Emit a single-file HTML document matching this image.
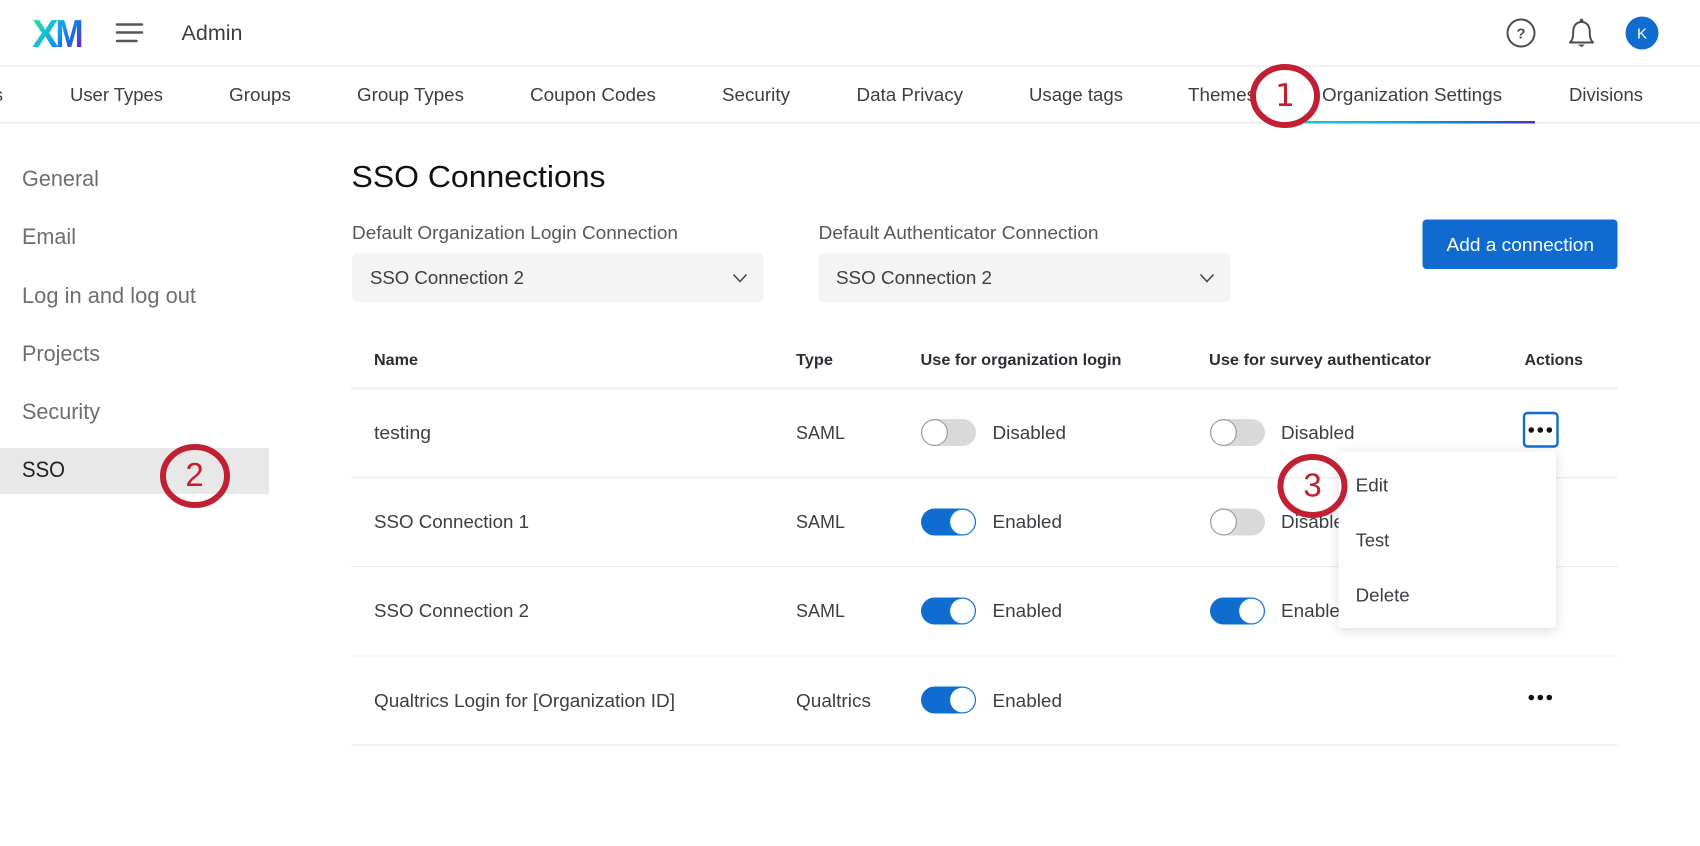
<!DOCTYPE html>
<html lang="en">
<head>
<meta charset="utf-8">
<title>SSO Connections</title>
<style>
html,body{margin:0;padding:0;background:#fff;width:1700px;height:846px;overflow:hidden}
svg{display:block}
text{font-family:"Liberation Sans",sans-serif;fill:#3b3e43}
.tab{font-size:18.5px}
.nav{font-size:22px;fill:#6c6e70}
.row{font-size:18.5px}
.th{font-size:16px;font-weight:bold;fill:#2b2e33}
.num{font-size:33px;fill:#c2202f}
</style>
</head>
<body>
<svg width="1700" height="846" viewBox="0 0 1700 846" xmlns="http://www.w3.org/2000/svg">
<defs>
<linearGradient id="xm" gradientUnits="userSpaceOnUse" x1="36" y1="18" x2="78" y2="48">
<stop offset="0" stop-color="#2be09a"/><stop offset=".28" stop-color="#18c4d0"/><stop offset=".5" stop-color="#11a0f0"/><stop offset=".75" stop-color="#1a70e0"/><stop offset="1" stop-color="#5f30d8"/>
</linearGradient>
<linearGradient id="ul" x1="0" x2="1" y1="0" y2="0">
<stop offset="0" stop-color="#12c9d8"/><stop offset=".35" stop-color="#10aee6"/><stop offset=".75" stop-color="#1370d8"/><stop offset="1" stop-color="#4a35b8"/>
</linearGradient>
<filter id="sh" x="-20%" y="-20%" width="140%" height="140%"><feDropShadow dx="0" dy="2" stdDeviation="6" flood-color="#000" flood-opacity=".15"/></filter>
<g id="off"><rect x=".5" y=".5" width="55" height="27" rx="13.5" fill="#d9d9d9"/><circle cx="14" cy="14" r="12.9" fill="#fff" stroke="#9a9c9f" stroke-width="1.2"/></g>
<g id="on"><rect x=".5" y=".5" width="55" height="27" rx="13.5" fill="#0f6dcf"/><circle cx="42" cy="14" r="12.9" fill="#fff" stroke="#1b78d8" stroke-width="1.2"/></g>
<g id="chev"><path d="M-6.500-3.500 0 3.500 6.500-3.500" fill="none" stroke="#45484c" stroke-width="1.600"/></g>
</defs>

<!-- header -->
<rect x="0" y="65.500" width="1700" height="1.500" fill="#ececec"/>
<text x="32" y="47" font-size="38.500" font-weight="bold" textLength="26.500" lengthAdjust="spacingAndGlyphs" style="fill:url(#xm)">X</text><text x="55.500" y="47" font-size="38.500" font-weight="bold" textLength="28" lengthAdjust="spacingAndGlyphs" style="fill:url(#xm)">M</text>
<g stroke="#54575b" stroke-width="2.500" stroke-linecap="round" fill="none"><path d="M117 24.500H142M117 32.500H142M117 41H136.500"/></g>
<text x="181.500" y="40" font-size="21.500" textLength="61" lengthAdjust="spacingAndGlyphs">Admin</text>
<circle cx="1521" cy="33" r="13.500" fill="none" stroke="#4a4d50" stroke-width="2"/>
<text x="1521" y="38.500" font-size="15" font-weight="bold" text-anchor="middle" style="fill:#4a4d50">?</text>
<path d="M1570 42.500c2.500-2.500 3.200-5 3.200-10.500 0-6 3-10 8.300-10s8.300 4 8.300 10c0 5.500.7 8 3.200 10.500z" fill="none" stroke="#4a4d50" stroke-width="2" stroke-linejoin="round"/>
<circle cx="1581.500" cy="20.500" r="1.800" fill="#4a4d50"/>
<path d="M1578 44.500h7l-3.500 2.800z" fill="#4a4d50"/>
<circle cx="1642" cy="33" r="16.500" fill="#0f6dcf"/>
<text x="1642" y="38.500" font-size="15" text-anchor="middle" style="fill:#fff">K</text>

<!-- tabs -->
<rect x="0" y="122" width="1700" height="1.500" fill="#ececec"/>
<text class="tab" x="-6" y="101" textLength="9" lengthAdjust="spacingAndGlyphs">s</text>
<text class="tab" x="70" y="101" textLength="93" lengthAdjust="spacingAndGlyphs">User Types</text>
<text class="tab" x="229" y="101" textLength="62" lengthAdjust="spacingAndGlyphs">Groups</text>
<text class="tab" x="357" y="101" textLength="107" lengthAdjust="spacingAndGlyphs">Group Types</text>
<text class="tab" x="530" y="101" textLength="126" lengthAdjust="spacingAndGlyphs">Coupon Codes</text>
<text class="tab" x="722" y="101" textLength="68" lengthAdjust="spacingAndGlyphs">Security</text>
<text class="tab" x="856.500" y="101" textLength="106.500" lengthAdjust="spacingAndGlyphs">Data Privacy</text>
<text class="tab" x="1029" y="101" textLength="94" lengthAdjust="spacingAndGlyphs">Usage tags</text>
<text class="tab" x="1188" y="101" textLength="68" lengthAdjust="spacingAndGlyphs">Themes</text>
<text class="tab" x="1322" y="101" textLength="180" lengthAdjust="spacingAndGlyphs">Organization Settings</text>
<text class="tab" x="1569" y="101" textLength="74" lengthAdjust="spacingAndGlyphs">Divisions</text>
<rect x="1305" y="121" width="230" height="2.500" fill="url(#ul)"/>

<!-- sidebar -->
<rect x="0" y="448" width="269" height="46" fill="#e8e8e8"/>
<text class="nav" x="22" y="186" textLength="77" lengthAdjust="spacingAndGlyphs">General</text>
<text class="nav" x="22" y="244" textLength="54" lengthAdjust="spacingAndGlyphs">Email</text>
<text class="nav" x="22" y="303" textLength="174" lengthAdjust="spacingAndGlyphs">Log in and log out</text>
<text class="nav" x="22" y="361" textLength="78" lengthAdjust="spacingAndGlyphs">Projects</text>
<text class="nav" x="22" y="419" textLength="78" lengthAdjust="spacingAndGlyphs">Security</text>
<text class="nav" x="22" y="477" textLength="43" lengthAdjust="spacingAndGlyphs" style="fill:#222">SSO</text>

<!-- title and selects -->
<text x="351.500" y="187" font-size="30.500" textLength="254" lengthAdjust="spacingAndGlyphs" style="fill:#111">SSO Connections</text>
<text x="352" y="239" font-size="18.500" textLength="326" lengthAdjust="spacingAndGlyphs" style="fill:#55585c">Default Organization Login Connection</text>
<text x="818.500" y="239" font-size="18.500" textLength="280" lengthAdjust="spacingAndGlyphs" style="fill:#55585c">Default Authenticator Connection</text>
<rect x="352" y="253" width="411.500" height="49" rx="5" fill="#f4f4f4"/>
<rect x="818.500" y="253" width="412" height="49" rx="5" fill="#f4f4f4"/>
<text class="row" x="370" y="284" textLength="154" lengthAdjust="spacingAndGlyphs">SSO Connection 2</text>
<text class="row" x="836" y="284" textLength="156" lengthAdjust="spacingAndGlyphs">SSO Connection 2</text>
<use href="#chev" x="740" y="278"/>
<use href="#chev" x="1207" y="278"/>
<rect x="1422.500" y="219.500" width="195" height="49.500" rx="4" fill="#0f6bcf"/>
<text x="1446.500" y="251" font-size="18.500" textLength="147.500" lengthAdjust="spacingAndGlyphs" style="fill:#fff">Add a connection</text>

<!-- table -->
<text class="th" x="374" y="365" textLength="44" lengthAdjust="spacingAndGlyphs">Name</text>
<text class="th" x="796" y="365" textLength="37" lengthAdjust="spacingAndGlyphs">Type</text>
<text class="th" x="920.500" y="365" textLength="201" lengthAdjust="spacingAndGlyphs">Use for organization login</text>
<text class="th" x="1209" y="365" textLength="222" lengthAdjust="spacingAndGlyphs">Use for survey authenticator</text>
<text class="th" x="1524.500" y="365" textLength="58.500" lengthAdjust="spacingAndGlyphs">Actions</text>
<g fill="#ececec">
<rect x="351" y="387.500" width="1266.500" height="1.500"/>
<rect x="351" y="477" width="1266.500" height="1.200"/>
<rect x="351" y="566" width="1266.500" height="1.200"/>
<rect x="351" y="655.500" width="1266.500" height="1.200"/>
<rect x="351" y="744.500" width="1266.500" height="1.200"/>
</g>

<text class="row" x="374" y="439" textLength="57" lengthAdjust="spacingAndGlyphs">testing</text>
<text class="row" x="374" y="528" textLength="155" lengthAdjust="spacingAndGlyphs">SSO Connection 1</text>
<text class="row" x="374" y="617" textLength="155" lengthAdjust="spacingAndGlyphs">SSO Connection 2</text>
<text class="row" x="374" y="707" textLength="301" lengthAdjust="spacingAndGlyphs">Qualtrics Login for [Organization ID]</text>
<text class="row" x="796" y="439" textLength="49" lengthAdjust="spacingAndGlyphs">SAML</text>
<text class="row" x="796" y="528" textLength="49" lengthAdjust="spacingAndGlyphs">SAML</text>
<text class="row" x="796" y="617" textLength="49" lengthAdjust="spacingAndGlyphs">SAML</text>
<text class="row" x="796" y="707" textLength="75" lengthAdjust="spacingAndGlyphs">Qualtrics</text>

<use href="#off" x="920.500" y="418.500"/>
<use href="#on" x="920.500" y="508"/>
<use href="#on" x="920.500" y="597"/>
<use href="#on" x="920.500" y="686"/>
<text class="row" x="992.500" y="439" textLength="73.500" lengthAdjust="spacingAndGlyphs">Disabled</text>
<text class="row" x="992.500" y="528" textLength="69.500" lengthAdjust="spacingAndGlyphs">Enabled</text>
<text class="row" x="992.500" y="617" textLength="69.500" lengthAdjust="spacingAndGlyphs">Enabled</text>
<text class="row" x="992.500" y="707" textLength="69.500" lengthAdjust="spacingAndGlyphs">Enabled</text>

<use href="#off" x="1209.500" y="418.500"/>
<use href="#off" x="1209.500" y="508"/>
<use href="#on" x="1209.500" y="597"/>
<text class="row" x="1281" y="439" textLength="73.500" lengthAdjust="spacingAndGlyphs">Disabled</text>
<text class="row" x="1281" y="528" textLength="73.500" lengthAdjust="spacingAndGlyphs">Disabled</text>
<text class="row" x="1281" y="617" textLength="69.500" lengthAdjust="spacingAndGlyphs">Enabled</text>

<!-- actions -->
<rect x="1524" y="413" width="33.500" height="33.500" rx="3.500" fill="#fff" stroke="#0f6dcf" stroke-width="2.400"/>
<g fill="#111">
<circle cx="1531.300" cy="430" r="2.800"/><circle cx="1540.300" cy="430" r="2.800"/><circle cx="1549.300" cy="430" r="2.800"/>
<circle cx="1531.300" cy="697.500" r="2.800"/><circle cx="1540.300" cy="697.500" r="2.800"/><circle cx="1549.300" cy="697.500" r="2.800"/>
</g>

<!-- menu -->
<rect x="1338.700" y="451.700" width="217.300" height="176.300" rx="4" fill="#fff" filter="url(#sh)"/>
<text class="row" x="1355.700" y="491.700" textLength="32.500" lengthAdjust="spacingAndGlyphs">Edit</text>
<text class="row" x="1355.700" y="546.700" textLength="33.500" lengthAdjust="spacingAndGlyphs">Test</text>
<text class="row" x="1355.700" y="601.700" textLength="54" lengthAdjust="spacingAndGlyphs">Delete</text>

<!-- annotations -->
<g fill="none" stroke="#c12033" stroke-width="6">
<ellipse cx="1285" cy="96" rx="32" ry="29"/>
<ellipse cx="195" cy="476" rx="32" ry="29"/>
<ellipse cx="1312.500" cy="486" rx="32" ry="29"/>
</g>
<text class="num" x="1285" y="106" text-anchor="middle" style="font-family:'DejaVu Sans',sans-serif;font-size:31px">1</text>
<text class="num" x="194.500" y="486" text-anchor="middle">2</text>
<text class="num" x="1312.500" y="496.500" text-anchor="middle">3</text>
</svg>
</body>
</html>
